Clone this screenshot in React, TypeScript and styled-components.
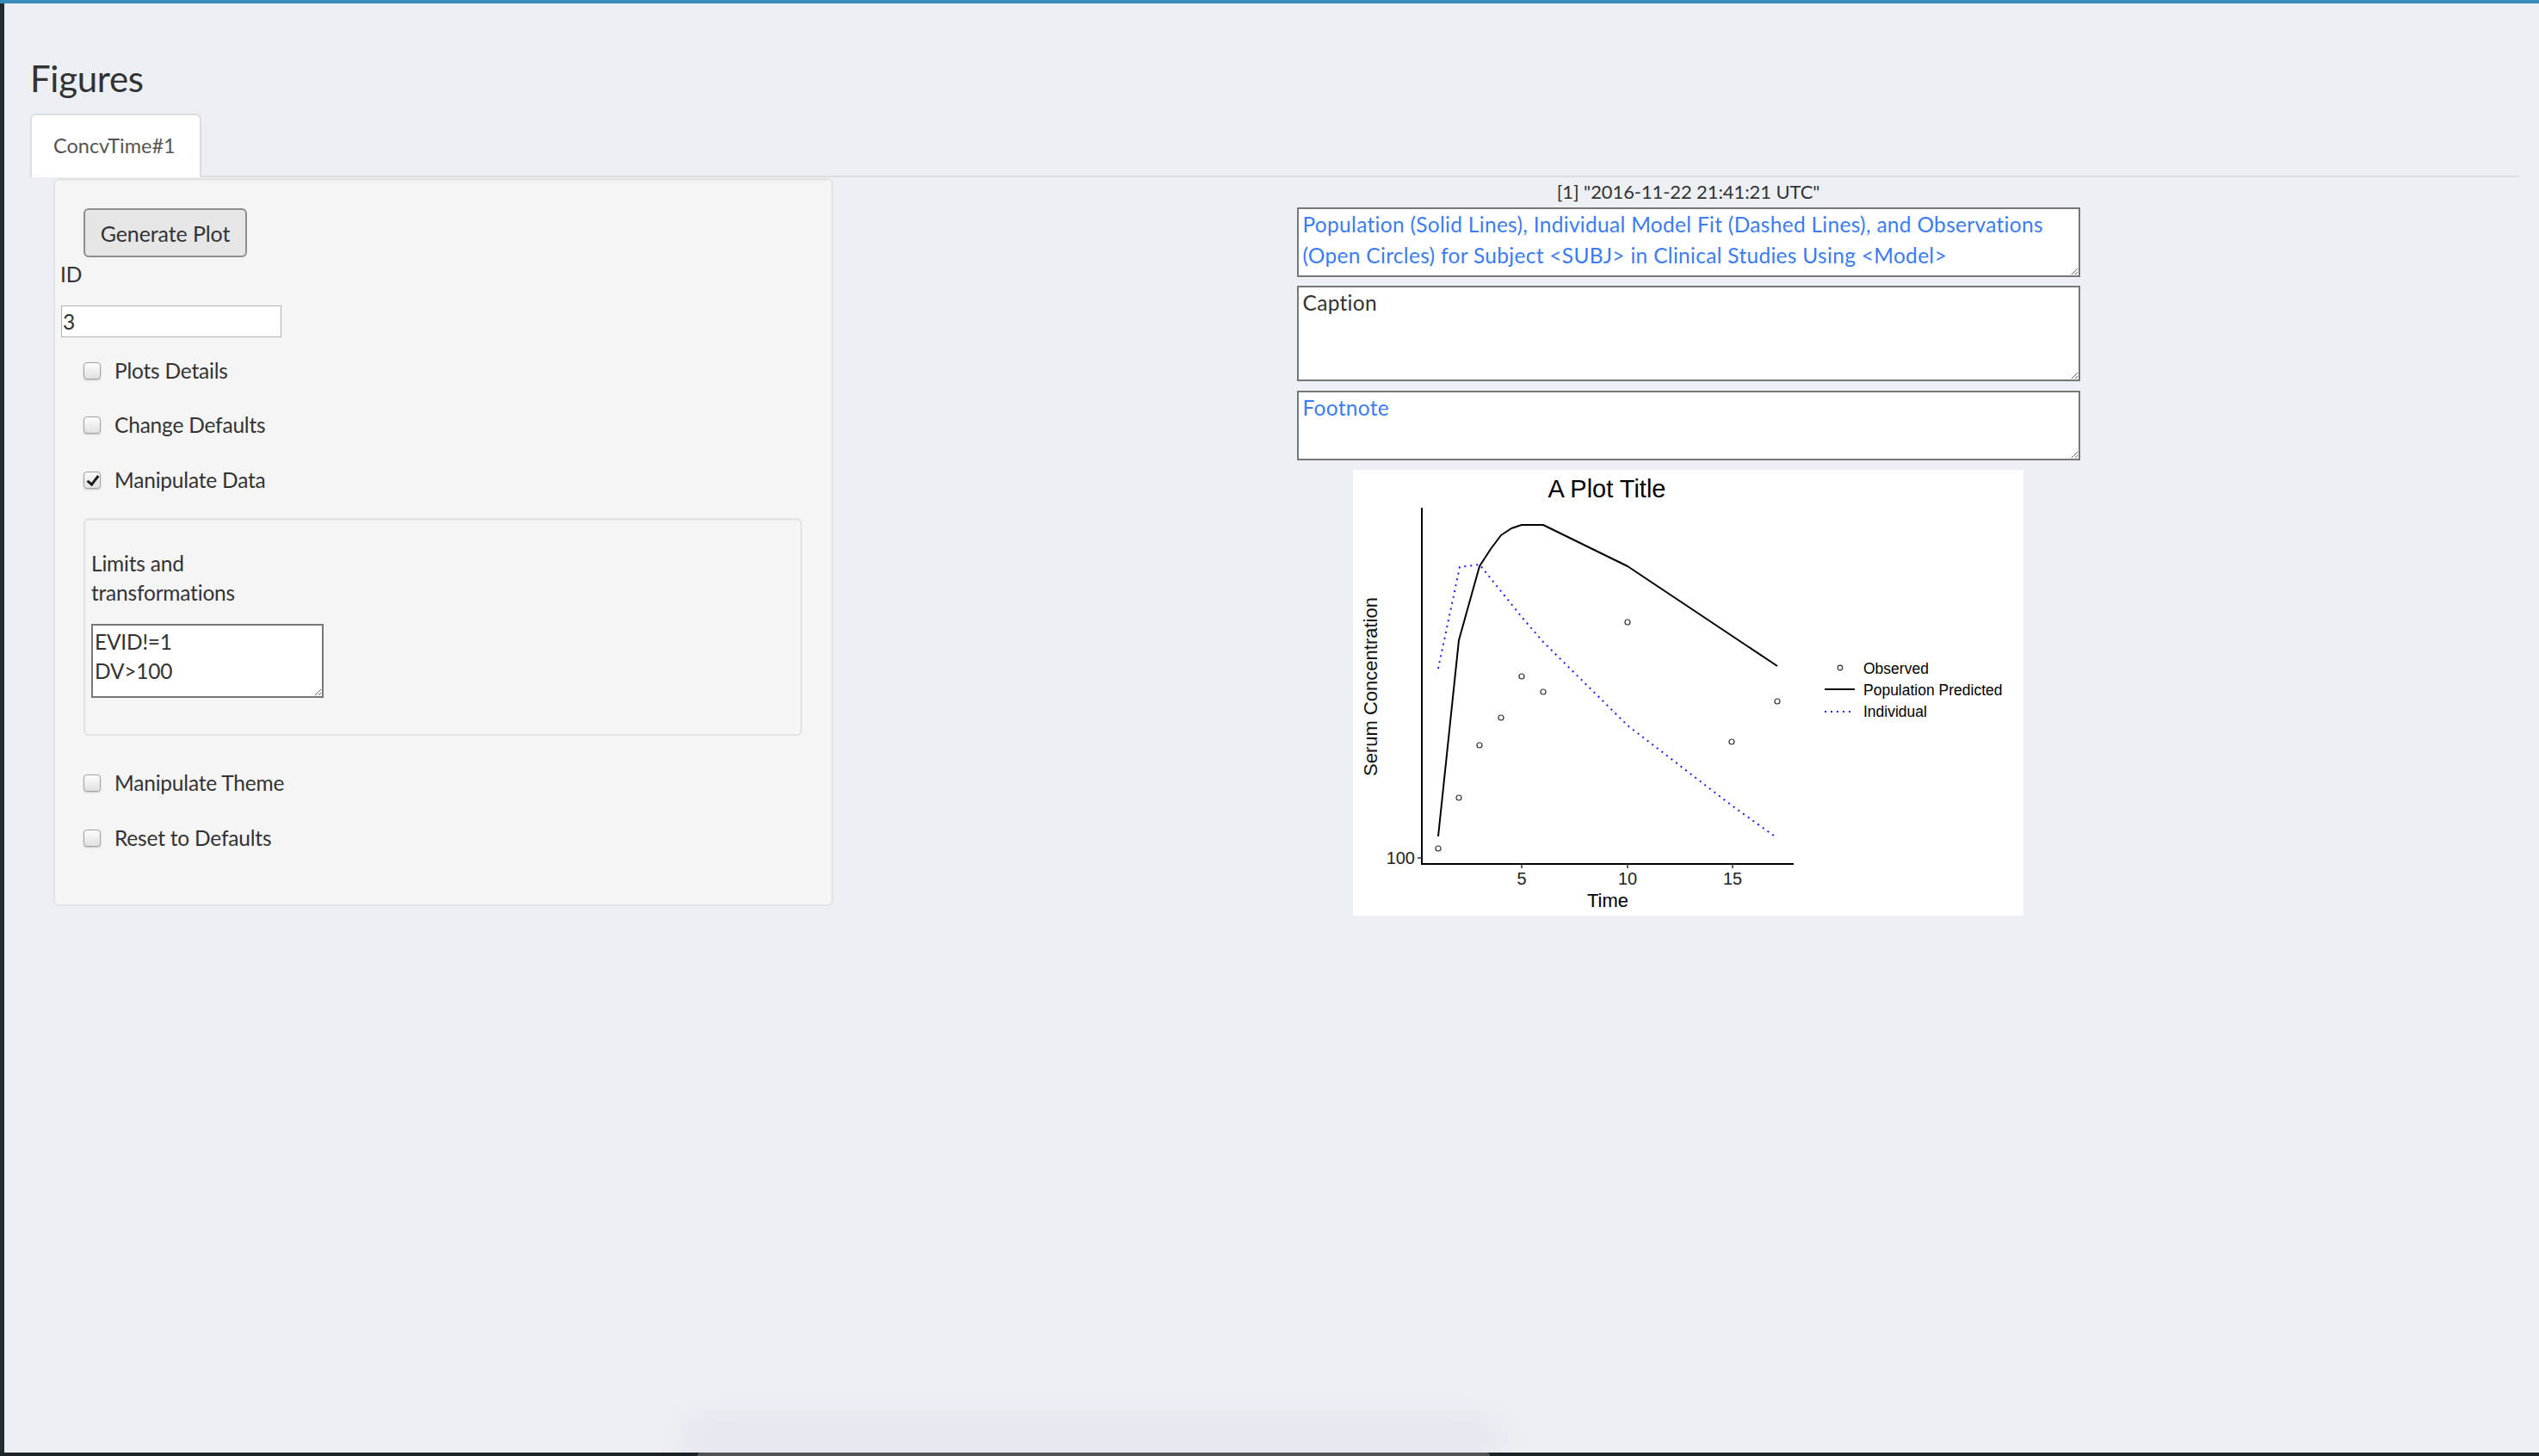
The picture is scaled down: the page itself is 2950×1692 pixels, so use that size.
import React from 'react';
import styled, { createGlobalStyle } from 'styled-components';

const GlobalStyle = createGlobalStyle`
  html, body { margin: 0; padding: 0; }
  body {
    background: #ecf0f5;
    font-family: Lato, "Open Sans", "Liberation Sans", sans-serif;
    color: #333;
    overflow: hidden;
  }
  * { box-sizing: border-box; }
`;

const Screen = styled.div`
  position: relative;
  width: 2950px;
  height: 1692px;
  display: flex;
  flex-direction: column;
  background: #ecf0f5;
  overflow: hidden;
`;

const TopBar = styled.div`
  flex: none;
  height: 4px;
  background: #3c8dbc;
`;

const Body = styled.div`
  flex: 1;
  display: flex;
  min-height: 0;
`;

const SideStrip = styled.div`
  flex: none;
  width: 5px;
  background: #222d32;
`;

const Content = styled.main`
  flex: 1;
  padding: 0 23px 0 30px;
`;

const Heading = styled.h1`
  margin: 64px 0 0;
  font-size: 42px;
  font-weight: 400;
  line-height: 46px;
  letter-spacing: -0.3px;
  color: #333;
`;

const TabBar = styled.div`
  margin-top: 18px;
  display: flex;
  border-bottom: 2px solid #dddddd;
`;

const Tab = styled.div`
  background: #fff;
  border: 2px solid #dddddd;
  border-bottom: none;
  border-radius: 7px 7px 0 0;
  padding: 18px 28px 20px 25px;
  margin-bottom: -2px;
  font-size: 23.5px;
  line-height: 34px;
  color: #555;
`;

const TabContent = styled.div`
  display: grid;
  grid-template-columns: 1fr 2fr;
`;

const LeftCol = styled.div`
  padding: 1px 31px 0 27px;
`;

const Well = styled.div`
  display: flex;
  flex-direction: column;
  align-items: flex-start;
  background: #f5f5f5;
  border: 2px solid #e3e3e3;
  border-radius: 6px;
  box-shadow: inset 0 1px 1px rgba(0, 0, 0, 0.05);
  padding: 33px 34px 60px 6px;
`;

const Button = styled.button`
  margin-left: 27px;
  width: 190px;
  height: 57px;
  background: #e6e6e6;
  border: 2px solid #8e8e8e;
  border-radius: 6px;
  font-family: Lato, "Open Sans", sans-serif;
  font-size: 25px;
  letter-spacing: -0.1px;
  color: #333;
  padding: 0;
`;

const FieldLabel = styled.div<{ $mt: number; $width?: number }>`
  margin-top: ${p => p.$mt}px;
  font-size: 24.5px;
  line-height: 34px;
  letter-spacing: -0.2px;
  color: #333;
  ${p => (p.$width ? `width: ${p.$width}px;` : '')}
`;

const TextInput = styled.input`
  margin-top: 19.5px;
  margin-left: 1px;
  width: 256px;
  height: 37px;
  border: 1px solid #b3b3b3;
  background: #fff;
  padding: 0 1px;
  font-family: Lato, "Open Sans", sans-serif;
  font-size: 24.5px;
  color: #333;
  outline: none;
`;

const CheckRow = styled.label<{ $mt: number }>`
  margin-top: ${p => p.$mt}px;
  margin-left: 27px;
  display: flex;
  align-items: center;
  gap: 16px;
  font-size: 24.5px;
  line-height: 34px;
  letter-spacing: -0.2px;
  color: #333;
`;

const CheckBox = styled.input`
  appearance: none;
  -webkit-appearance: none;
  margin: 0;
  position: relative;
  flex: none;
  width: 20px;
  height: 20px;
  border: 1px solid #a2a2a2;
  border-radius: 4px;
  background: linear-gradient(#fdfdfd, #e0e0e0);
  box-shadow: 0 1px 2px rgba(0, 0, 0, 0.2);
  &:checked::after {
    content: '';
    position: absolute;
    left: 6px;
    top: 1px;
    width: 5px;
    height: 11px;
    border: solid #1e1e1e;
    border-width: 0 3px 3px 0;
    transform: rotate(38deg);
  }
`;

const InnerWell = styled.div`
  margin-top: 27.5px;
  margin-left: 27px;
  align-self: stretch;
  background: #f5f5f5;
  border: 2px solid #e3e3e3;
  border-radius: 6px;
  box-shadow: inset 0 1px 1px rgba(0, 0, 0, 0.05);
  padding: 33.5px 7px 42px;
`;

const SmallArea = styled.textarea`
  display: block;
  margin-top: 19.5px;
  width: 270px;
  height: 86px;
  border: 2px solid #777;
  background: #fff;
  padding: 2px 2px;
  font-family: Lato, "Open Sans", sans-serif;
  font-size: 24.5px;
  line-height: 34px;
  letter-spacing: -0.2px;
  color: #333;
  overflow: hidden;
  outline: none;
`;

const RightCol = styled.div`
  display: flex;
  flex-direction: column;
  align-items: center;
  padding-right: 3px;
`;

const Stamp = styled.div`
  font-size: 22px;
  line-height: 34px;
  letter-spacing: -0.1px;
  color: #333;
`;

const BigArea = styled.textarea<{ $h: number; $mt: number; $blue?: boolean }>`
  display: block;
  margin-top: ${p => p.$mt}px;
  width: 910px;
  height: ${p => p.$h}px;
  border: 2px solid #777;
  background: #fff;
  padding: 0 5px;
  font-family: Lato, "Open Sans", sans-serif;
  font-size: 24.5px;
  line-height: 36px;
  letter-spacing: 0.3px;
  color: ${p => (p.$blue ? '#3b7cf2' : '#333')};
  overflow: hidden;
  outline: none;
`;

const PlotBox = styled.div`
  margin-top: 11px;
  width: 779px;
  height: 518px;
  background: #fff;
`;

const BottomBar = styled.div`
  flex: none;
  height: 4px;
  background: #1c2428;
`;

const Dock = styled.div`
  position: absolute;
  left: 810px;
  bottom: 0;
  width: 921px;
  height: 4px;
  background: #4f5457;
  border-radius: 6px 6px 0 0;
  box-shadow: 0 -18px 45px 12px rgba(60, 70, 85, 0.08);
`;

const pop: [number, number][] = [
  [99, 426], [123, 198], [147, 112], [160, 92], [172, 76], [184, 68], [196, 64], [221, 64], [319, 112], [493, 228],
];
const indiv: [number, number][] = [
  [99, 231], [124, 113], [147, 110], [196, 171], [221, 200], [319, 297], [440, 390], [493, 428],
];
const obs: [number, number][] = [
  [99, 440], [123, 381], [147, 320], [172, 288], [196, 240], [221, 258], [319, 177], [440, 316], [493, 269],
];
const pts = (a: [number, number][]) => a.map(p => p.join(',')).join(' ');

const PLOT_FONT = '"Liberation Sans", Arial, sans-serif';

const Plot = () => (
  <svg width="779" height="518" viewBox="0 0 779 518" fontFamily={PLOT_FONT}>
    <text x="295" y="32" fontSize="29" textAnchor="middle" fill="#000">A Plot Title</text>
    <line x1="80" y1="44" x2="80" y2="459" stroke="#000" strokeWidth="2" />
    <line x1="79" y1="458" x2="512" y2="458" stroke="#000" strokeWidth="2" />
    <line x1="75" y1="451" x2="80" y2="451" stroke="#333" strokeWidth="1.5" />
    <text x="72" y="458" fontSize="20" textAnchor="end" fill="#222">100</text>
    {[
      [196, '5'],
      [319, '10'],
      [441, '15'],
    ].map(([x, l]) => (
      <g key={l as string}>
        <line x1={x as number} y1="458" x2={x as number} y2="463" stroke="#333" strokeWidth="1.5" />
        <text x={x as number} y="482" fontSize="20" textAnchor="middle" fill="#222">{l}</text>
      </g>
    ))}
    <text x="296" y="508" fontSize="22" textAnchor="middle" fill="#000">Time</text>
    <text x="0" y="0" fontSize="22" textAnchor="middle" fill="#111" transform="translate(28 252) rotate(-90)">
      Serum Concentration
    </text>
    <polyline points={pts(pop)} fill="none" stroke="#000" strokeWidth="2" strokeLinejoin="round" />
    <polyline points={pts(indiv)} fill="none" stroke="#1a1aff" strokeWidth="2" strokeDasharray="2 5" />
    {obs.map(([x, y], i) => (
      <circle key={i} cx={x} cy={y} r="3" fill="none" stroke="#333" strokeWidth="1.2" />
    ))}
    <circle cx="566" cy="230" r="2.8" fill="none" stroke="#333" strokeWidth="1.2" />
    <line x1="548" y1="255" x2="583" y2="255" stroke="#000" strokeWidth="2" />
    <line x1="548" y1="281" x2="583" y2="281" stroke="#1a1aff" strokeWidth="2" strokeDasharray="2 5" />
    <text x="593" y="237" fontSize="17.5" fill="#000">Observed</text>
    <text x="593" y="262" fontSize="17.5" fill="#000">Population Predicted</text>
    <text x="593" y="287" fontSize="17.5" fill="#000">Individual</text>
  </svg>
);

const TITLE =
  'Population (Solid Lines), Individual Model Fit (Dashed Lines), and Observations (Open Circles) for Subject <SUBJ> in Clinical Studies Using <Model>';

export default function App() {
  return (
    <>
      <GlobalStyle />
      <Screen>
        <TopBar />
        <Body>
          <SideStrip />
          <Content>
            <Heading>Figures</Heading>
            <TabBar>
              <Tab>ConcvTime#1</Tab>
            </TabBar>
            <TabContent>
              <LeftCol>
                <Well>
                  <Button>Generate Plot</Button>
                  <FieldLabel $mt={2.5}>ID</FieldLabel>
                  <TextInput value="3" readOnly />
                  <CheckRow $mt={21.5}>
                    <CheckBox type="checkbox" readOnly />
                    Plots Details
                  </CheckRow>
                  <CheckRow $mt={29}>
                    <CheckBox type="checkbox" readOnly />
                    Change Defaults
                  </CheckRow>
                  <CheckRow $mt={30}>
                    <CheckBox type="checkbox" checked readOnly />
                    Manipulate Data
                  </CheckRow>
                  <InnerWell>
                    <FieldLabel $mt={0} $width={200}>
                      Limits and transformations
                    </FieldLabel>
                    <SmallArea value={'EVID!=1\nDV>100'} readOnly />
                  </InnerWell>
                  <CheckRow $mt={37.5}>
                    <CheckBox type="checkbox" readOnly />
                    Manipulate Theme
                  </CheckRow>
                  <CheckRow $mt={30}>
                    <CheckBox type="checkbox" readOnly />
                    Reset to Defaults
                  </CheckRow>
                </Well>
              </LeftCol>
              <RightCol>
                <Stamp>[1] "2016-11-22 21:41:21 UTC"</Stamp>
                <BigArea $h={81} $mt={0.5} $blue value={TITLE} readOnly />
                <BigArea $h={111} $mt={10} value="Caption" readOnly />
                <BigArea $h={81} $mt={11} $blue value="Footnote" readOnly />
                <PlotBox>
                  <Plot />
                </PlotBox>
              </RightCol>
            </TabContent>
          </Content>
        </Body>
        <BottomBar />
        <Dock />
      </Screen>
    </>
  );
}
